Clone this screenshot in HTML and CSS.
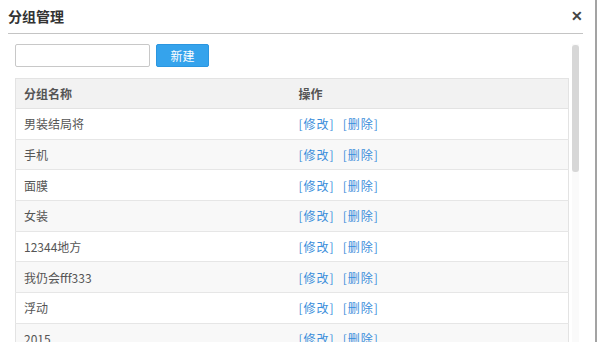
FILE: index.html
```html
<!DOCTYPE html>
<html lang="zh-CN">
<head>
    <meta charset="UTF-8">
    <title>分组管理</title>

    <link rel="stylesheet" href="styles.css">

</head>
<body>
<div class="dialog">
    <div class="dialog-head">
        <span class="dialog-title">分组管理</span>
        <span class="dialog-close">&#x2715;</span>
    </div>
    <div class="dialog-body">
        <div class="content">
            <div class="toolbar">
                <input class="group-input" type="text">
                <button class="btn-new">新建</button>
            </div>
            <table class="group-table">
                <thead>
                <tr>
                    <th class="col-name">分组名称</th>
                    <th>操作</th>
                </tr>
                </thead>
                <tbody>
                <tr><td>男装结局将</td><td><a>[修改]</a><a>[删除]</a></td></tr>
                <tr><td>手机</td><td><a>[修改]</a><a>[删除]</a></td></tr>
                <tr><td>面膜</td><td><a>[修改]</a><a>[删除]</a></td></tr>
                <tr><td>女装</td><td><a>[修改]</a><a>[删除]</a></td></tr>
                <tr><td>12344地方</td><td><a>[修改]</a><a>[删除]</a></td></tr>
                <tr><td>我仍会fff333</td><td><a>[修改]</a><a>[删除]</a></td></tr>
                <tr><td>浮动</td><td><a>[修改]</a><a>[删除]</a></td></tr>
                <tr><td>2015</td><td><a>[修改]</a><a>[删除]</a></td></tr>
                </tbody>
            </table>
        </div>
        <div class="scrollbar">
            <div class="thumb"></div>
        </div>
    </div>
</div>
</body>
</html>
```

FILE: styles.css
```css
* {
    box-sizing: border-box;
}

html, body {
    margin: 0;
    height: 100%;
    overflow: hidden;
    background-color: #fff;
}

body {
    font-family: "Noto Sans CJK SC", "Liberation Sans", sans-serif;
    font-size: 12px;
    color: #555;
}

.dialog {
    width: 597px;
    height: 342px;
    border-right: 2px solid #a3a3a3;
    overflow: hidden;
}

.dialog-head {
    display: flex;
    justify-content: space-between;
    align-items: center;
    height: 34px;
    margin: 0 12px 0 8px;
    border-bottom: 1px solid #c4c4c4;
}

.dialog-title {
    font-size: 14px;
    font-weight: bold;
    color: #333;
    line-height: 1;
    margin-top: -2px;
}

.dialog-close {
    font-size: 14px;
    font-weight: bold;
    color: #444;
    margin-top: -3px;
    margin-right: 0;
}

.dialog-body {
    display: flex;
    padding: 10px 0 0 15px;
}

.content {
    width: 554px;
}

.toolbar {
    display: flex;
    gap: 6px;
    height: 23px;
    margin-bottom: 11px;
}

.group-input {
    width: 135px;
    height: 23px;
    border: 1px solid #c8c8c8;
    border-radius: 2px;
    margin: 0;
    padding: 0 4px;
}

.btn-new {
    width: 53px;
    height: 23px;
    border: 1px solid #2b96e0;
    border-radius: 2px;
    background-color: #35a3ec;
    color: #fff;
    font-family: inherit;
    font-size: 12px;
    padding: 0;
}

.group-table {
    width: 100%;
    table-layout: fixed;
    border-collapse: collapse;
    border: 1px solid #e3e3e3;
}

.group-table th {
    text-align: left;
    font-weight: bold;
    color: #555;
    background-color: #f2f2f2;
    height: 30px;
    padding: 0 8px;
    border-bottom: 1px solid #e3e3e3;
}

.group-table .col-name {
    width: 275px;
}

.group-table td {
    height: 30.7px;
    padding: 0 8px;
    border-bottom: 1px solid #e6e6e6;
}

.group-table tbody tr:nth-child(even) td {
    background-color: #f8f8f8;
}

.group-table a {
    color: #3b8edb;
    letter-spacing: 1px;
    margin-right: 8px;
    cursor: pointer;
}

.scrollbar {
    width: 7px;
    margin-left: 3px;
    height: 300px;
    background-color: #fafafa;
}

.thumb {
    height: 127px;
    margin-top: 1px;
    background-color: #d7d7d7;
    border-radius: 3px;
}
```
